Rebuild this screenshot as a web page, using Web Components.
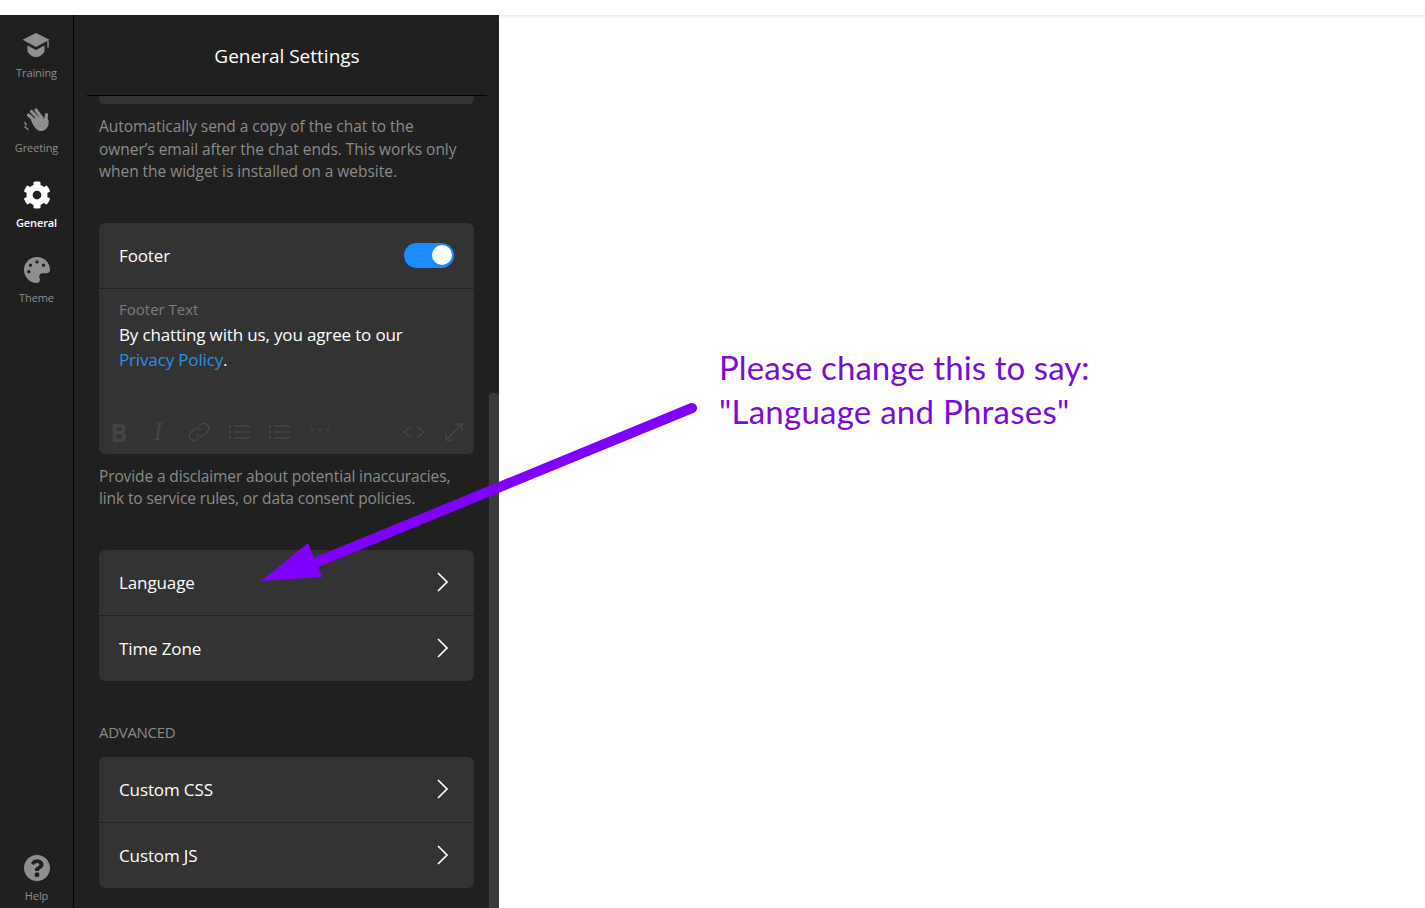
<!doctype html>
<html>
<head>
<meta charset="utf-8">
<style>
  html, body { margin: 0; height: 100%; background: #fff; overflow: hidden; }
</style>
</head>
<body>
<settings-app>
  <side-rail slot="rail"></side-rail>
  <settings-panel slot="panel" heading="General Settings">
    <div class="stub"></div>
    <help-text style="--top:11px;--ls:-.03px">Automatically send a copy of the chat to the owner’s email after the chat ends. This works only when the widget is installed on a website.</help-text>
    <settings-card style="--top:40px">
      <card-row label="Footer"><toggle-switch></toggle-switch></card-row>
      <footer-editor></footer-editor>
    </settings-card>
    <help-text style="--top:11px;--ls:-.12px">Provide a disclaimer about potential inaccuracies, link to service rules, or data consent policies.</help-text>
    <settings-card style="--top:40px">
      <card-row label="Language" chevron></card-row>
      <card-row label="Time Zone" chevron></card-row>
    </settings-card>
    <section-title>ADVANCED</section-title>
    <settings-card>
      <card-row label="Custom CSS" chevron></card-row>
      <card-row label="Custom JS" chevron></card-row>
    </settings-card>
  </settings-panel>
</settings-app>
<note-arrow></note-arrow>

<script>
const UI_FONT = '"Open Sans", "Noto Sans", sans-serif';

const icons = {
  training: '<svg viewBox="24 33 27 25" width="27" height="25"><path d="M37 33L50.500 39.800 37 47 23.500 39.800Z"/><path d="M28.500 45.500L37 50 45.500 45.500V51.500C43.500 55 40.500 57 37 57S30.500 55 28.500 51.500Z"/><path d="M49 40.500V47.500" stroke="currentColor" stroke-width="1.500" fill="none"/></svg>',
  greeting: '<svg viewBox="24 107 27 26" width="27" height="26"><g fill="none" stroke="currentColor" stroke-linecap="round"><path stroke-width="3.200" d="M29.500 115L38 123M32.500 111.500L41 120.500M37 110L43 118M47.500 114.500L46.800 122"/><path stroke-width="1.500" d="M26 122.500L27 125M26 127L29 129.500"/></g><path d="M32 120L41 116 45 119 46 116 49.500 120C50.500 125 48 130 43 131 38.500 131.500 35 128 32 120Z"/></svg>',
  general: '<svg viewBox="0 0 512 512" width="28" height="28"><path d="M487.4 315.7l-42.6-24.6c4.3-23.2 4.3-47 0-70.2l42.6-24.6c4.9-2.8 7.1-8.6 5.5-14-11.1-35.6-30-67.8-54.7-94.6-3.8-4.1-10-5.1-14.8-2.3L380.8 110c-17.9-15.4-38.5-27.3-60.8-35.1V25.8c0-5.6-3.9-10.5-9.4-11.7-36.7-8.2-74.3-7.8-109.2 0-5.5 1.2-9.4 6.1-9.4 11.7V75c-22.2 7.9-42.8 19.8-60.8 35.1L88.7 85.5c-4.9-2.8-11-1.9-14.8 2.3-24.7 26.7-43.6 58.9-54.7 94.6-1.7 5.4.6 11.2 5.5 14L67.3 221c-4.3 23.2-4.3 47 0 70.2l-42.6 24.6c-4.9 2.8-7.1 8.6-5.5 14 11.1 35.6 30 67.8 54.7 94.6 3.8 4.1 10 5.1 14.8 2.3l42.6-24.6c17.9 15.4 38.5 27.3 60.8 35.1v49.2c0 5.6 3.9 10.5 9.4 11.7 36.7 8.2 74.3 7.8 109.2 0 5.5-1.2 9.4-6.1 9.4-11.7v-49.2c22.2-7.9 42.8-19.8 60.8-35.1l42.6 24.6c4.9 2.8 11 1.9 14.8-2.3 24.7-26.7 43.6-58.9 54.7-94.6 1.5-5.5-.7-11.3-5.6-14.1zM256 336c-44.1 0-80-35.9-80-80s35.9-80 80-80 80 35.9 80 80-35.9 80-80 80z"/></svg>',
  theme: '<svg viewBox="0 0 512 512" width="26" height="26"><path d="M204.3 5C104.9 24.4 24.8 104.3 5.2 203.4c-37 187 131.7 326.4 258.8 306.7 41.2-6.4 61.4-54.6 42.5-91.7-23.1-45.4 9.9-98.4 60.9-98.4h79.7c35.8 0 64.8-29.6 64.9-65.3C511.500 97.100 368.100-26.900 204.300 5zM96 320c-17.700 0-32-14.300-32-32s14.300-32 32-32 32 14.300 32 32-14.300 32-32 32zm32-128c-17.700 0-32-14.300-32-32s14.300-32 32-32 32 14.300 32 32-14.300 32-32 32zm128-64c-17.700 0-32-14.300-32-32s14.300-32 32-32 32 14.300 32 32-14.300 32-32 32zm128 64c-17.700 0-32-14.300-32-32s14.300-32 32-32 32 14.300 32 32-14.300 32-32 32z"/></svg>',
  help: '<svg viewBox="8 8 496 496" width="26" height="26"><path d="M504 256c0 136.997-111.043 248-248 248S8 392.997 8 256C8 119.083 119.043 8 256 8s248 111.083 248 248zM262.655 90c-54.497 0-89.255 22.957-116.549 63.758-3.536 5.286-2.353 12.415 2.715 16.258l34.699 26.310c5.205 3.947 12.621 3.008 16.665-2.122 17.864-22.658 30.113-35.797 57.303-35.797 20.429 0 45.698 13.148 45.698 32.958 0 14.976-12.363 22.667-32.534 33.976C247.128 238.528 216 254.941 216 296v4c0 6.627 5.373 12 12 12h56c6.627 0 12-5.373 12-12v-1.333c0-28.462 83.186-29.647 83.186-106.667 0-58.002-60.165-102-116.531-102zM256 338c-25.365 0-46 20.635-46 46 0 25.364 20.635 46 46 46s46-20.636 46-46c0-25.365-20.635-46-46-46z"/></svg>'
};

class SettingsApp extends HTMLElement {
  constructor() {
    super();
    this.attachShadow({ mode: "open" }).innerHTML = `
      <style>
        :host { display: flex; flex-direction: column; height: 908px; font-family: ${UI_FONT}; }
        .topbar { flex: 0 0 15px; background: #fff; box-shadow: 0 1px 3px rgba(0,0,0,.12); position: relative; }
        .main { flex: 1; display: flex; min-height: 0; }
        .rest { flex: 1; background: #fff; }
      </style>
      <div class="topbar"></div>
      <div class="main">
        <slot name="rail"></slot>
        <slot name="panel"></slot>
        <div class="rest"></div>
      </div>`;
  }
}

class SideRail extends HTMLElement {
  constructor() {
    super();
    const item = (key, label, active) =>
      `<div class="item ${active ? "active" : ""}"><span class="ic">${icons[key]}</span><span class="lb">${label}</span></div>`;
    this.attachShadow({ mode: "open" }).innerHTML = `
      <style>
        :host { display: flex; flex: 0 0 73px; flex-direction: column; justify-content: space-between; background: #202020; border-right: 1px solid #000; padding-top: 15px; }
        .item { height: 75px; display: flex; flex-direction: column; align-items: center; color: #8f8f8f; }
        .ic { height: 30px; display: flex; align-items: center; justify-content: center; }
        .ic svg { fill: currentColor; display: block; }
        .lb { font-size: 11px; line-height: 15px; margin-top: 5px; letter-spacing: -.1px; }
        .active { color: #fff; }
        .active .lb { font-weight: 600; }
        .help { height: 55px; }
      </style>
      <div>
        ${item("training", "Training")}
        ${item("greeting", "Greeting")}
        ${item("general", "General", true)}
        ${item("theme", "Theme")}
      </div>
      <div class="item help"><span class="ic">${icons.help}</span><span class="lb">Help</span></div>`;
  }
}

class SettingsPanel extends HTMLElement {
  constructor() {
    super();
    this.attachShadow({ mode: "open" }).innerHTML = `
      <style>
        :host { display: flex; flex: 0 0 425px; background: #202020; color: #fff; overflow: hidden; }
        .col { width: 415px; flex: none; display: flex; flex-direction: column; }
        header { height: 81px; margin: 0 2px 0 13px; padding-top: 2px; box-sizing: border-box; border-bottom: 1px solid #000; display: flex; align-items: center; justify-content: center; font-size: 19px; }
        .scroll { padding: 0 15px 0 25px; }
        ::slotted(.stub) { height: 8px; background: #333; border-radius: 0 0 5px 5px; }
        .bar { width: 10px; flex: none; padding-top: 378px; }
        .thumb { height: 600px; background: #3a3a3a; border-radius: 4px 4px 0 0; }
      </style>
      <div class="col">
        <header id="title"></header>
        <div class="scroll"><slot></slot></div>
      </div>
      <div class="bar"><div class="thumb"></div></div>`;
  }
  connectedCallback() {
    this.shadowRoot.getElementById("title").textContent = this.getAttribute("heading") || "";
  }
}

class HelpText extends HTMLElement {
  constructor() {
    super();
    this.attachShadow({ mode: "open" }).innerHTML = `
      <style>
        :host { display: block; margin-top: var(--top, 0); padding-right: 9px; color: #8c8c8c; font-size: 15.500px; line-height: 22.500px; letter-spacing: var(--ls, 0); }
      </style><slot></slot>`;
  }
}

class SettingsCard extends HTMLElement {
  constructor() {
    super();
    this.attachShadow({ mode: "open" }).innerHTML = `
      <style>
        :host { display: block; margin-top: var(--top, 0); background: #333; border-radius: 6px; overflow: hidden; }
        ::slotted(*:not(:last-child)) { border-bottom: 1px solid #232323; }
      </style><slot></slot>`;
  }
}

class CardRow extends HTMLElement {
  constructor() {
    super();
    this.attachShadow({ mode: "open" }).innerHTML = `
      <style>
        :host { display: flex; box-sizing: border-box; height: 66px; align-items: center; justify-content: space-between; padding: 0 20px; font-size: 17px; letter-spacing: -.12px; color: #fff; }
        :host(:last-child) { height: 65px; }
        svg { display: block; margin-right: 6px; }
      </style>
      <span id="label"></span>
      <slot></slot>`;
  }
  connectedCallback() {
    this.shadowRoot.getElementById("label").textContent = this.getAttribute("label");
    if (this.hasAttribute("chevron")) {
      this.shadowRoot.innerHTML += `<svg width="11" height="20" viewBox="0 0 11 20" fill="none" stroke="#fff" stroke-width="1.600"><path d="M1 1l9 9-9 9"/></svg>`;
      this.shadowRoot.getElementById("label").textContent = this.getAttribute("label");
    }
  }
}

class ToggleSwitch extends HTMLElement {
  constructor() {
    super();
    this.attachShadow({ mode: "open" }).innerHTML = `
      <style>
        :host { display: flex; justify-content: flex-end; align-items: center; width: 50px; height: 25px; box-sizing: border-box; padding-right: 2px; background: #1a8cff; border-radius: 13px; }
        i { display: block; width: 20px; height: 20px; background: #fff; border-radius: 50%; }
      </style><i></i>`;
  }
}

class FooterEditor extends HTMLElement {
  constructor() {
    super();
    this.attachShadow({ mode: "open" }).innerHTML = `
      <style>
        :host { display: flex; flex-direction: column; height: 165px; box-sizing: border-box; padding: 10px 20px 0; }
        .cap { font-size: 15px; line-height: 20px; color: #7d7d7d; letter-spacing: 0; }
        .txt { font-size: 17px; line-height: 25px; color: #fff; letter-spacing: -.15px; margin-top: 3px; }
        a { color: #2c8fe8; text-decoration: none; }
        .tools { margin-top: auto; height: 44px; margin-left: -11px; margin-right: -9px; display: flex; align-items: center; color: #454545; }
        .tools > * { flex: none; }
        .b { font: 700 25px "Open Sans", sans-serif; width: 22px; text-align: center; }
        .i { font: italic 400 27px "Liberation Serif", serif; width: 22px; text-align: center; margin-left: 17px; }
        svg { display: block; fill: none; stroke: currentColor; stroke-width: 1.500; }
      </style>
      <div class="cap">Footer Text</div>
      <div class="txt">By chatting with us, you agree to our<br><a>Privacy Policy</a>.</div>
      <div class="tools">
        <span class="b">B</span>
        <span class="i">I</span>
        <svg style="margin-left:18px" width="24" height="24" viewBox="0 0 24 24"><path d="M10 14a5 5 0 0 0 7.500.5l3-3a5 5 0 0 0-7-7l-1.500 1.500"/><path d="M14 10a5 5 0 0 0-7.500-.5l-3 3a5 5 0 0 0 7 7l1.500-1.500"/></svg>
        <svg style="margin-left:17px" width="22" height="18" viewBox="0 0 22 18"><path d="M6 3h16M6 9h16M6 15h16"/><path stroke-width="2" d="M1 3h2M1 9h2M1 15h2"/></svg>
        <svg style="margin-left:18px" width="22" height="18" viewBox="0 0 22 18"><path d="M6 3h16M6 9h16M6 15h16"/><path stroke-width="2" d="M1 3h2M1 9h2M1 15h2"/></svg>
        <svg style="margin-left:20px;margin-top:-4px" width="22" height="6" viewBox="0 0 22 6"><path stroke-width="2" stroke-dasharray="2 6" d="M1 3h20"/></svg>
        <svg style="margin-left:auto" width="24" height="14" viewBox="0 0 24 14"><path d="M9 1L2 7l7 6M15 1l7 6-7 6"/></svg>
        <svg style="margin-left:19px" width="18" height="18" viewBox="0 0 18 18"><path d="M1 17L17 1M10 1h7v7M1 10v7h7"/></svg>
      </div>`;
  }
}

class SectionTitle extends HTMLElement {
  constructor() {
    super();
    this.attachShadow({ mode: "open" }).innerHTML = `
      <style>
        :host { display: block; margin-top: 40px; height: 36px; font-size: 15px; line-height: 22px; color: #8c8c8c; letter-spacing: -.3px; }
      </style><slot></slot>`;
  }
}

// the purple arrow and its note are drawn over the page
class NoteArrow extends HTMLElement {
  constructor() {
    super();
    this.attachShadow({ mode: "open" }).innerHTML = `
      <style>
        :host { position: absolute; inset: 0; display: block; pointer-events: none; }
        svg { position: absolute; left: 0; top: 0; }
        .note { position: absolute; left: 719px; top: 345px; font: 33px/44px Lato, "Open Sans", sans-serif; color: #7a0cd8; white-space: nowrap; }
        .a { letter-spacing: .08px; }
        .b { letter-spacing: .25px; }
      </style>
      <svg width="1425" height="908" viewBox="0 0 1425 908">
        <path d="M692 408L300 569" stroke="#7f00ff" stroke-width="10" stroke-linecap="round" fill="none"/>
        <path d="M261 581L308 543L322 577Z" fill="#7f00ff"/>
      </svg>
      <div class="note"><span class="a">Please change this to say:</span><br><span class="b">"Language and Phrases"</span></div>`;
  }
}

customElements.define("settings-app", SettingsApp);
customElements.define("side-rail", SideRail);
customElements.define("settings-panel", SettingsPanel);
customElements.define("help-text", HelpText);
customElements.define("settings-card", SettingsCard);
customElements.define("card-row", CardRow);
customElements.define("toggle-switch", ToggleSwitch);
customElements.define("footer-editor", FooterEditor);
customElements.define("section-title", SectionTitle);
customElements.define("note-arrow", NoteArrow);
</script>
</body>
</html>
